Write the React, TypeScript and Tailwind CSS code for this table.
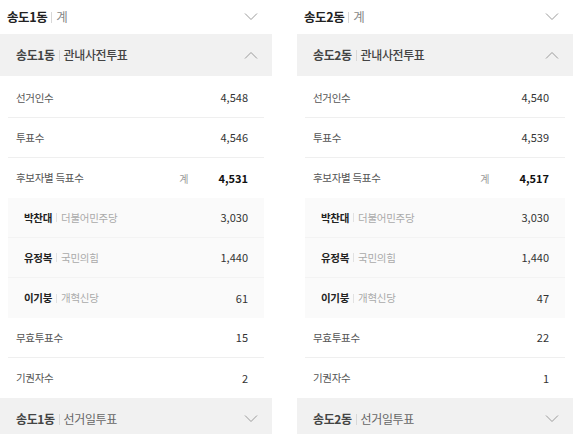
import React from "react"

type Candidate = { name: string; party: string; votes: string }

type PanelData = {
  dong: string
  electors: string
  voters: string
  total: string
  candidates: Candidate[]
  invalid: string
  abstain: string
}

const panels: PanelData[] = [
  {
    dong: "송도1동",
    electors: "4,548",
    voters: "4,546",
    total: "4,531",
    candidates: [
      { name: "박찬대", party: "더불어민주당", votes: "3,030" },
      { name: "유정복", party: "국민의힘", votes: "1,440" },
      { name: "이기붕", party: "개혁신당", votes: "61" },
    ],
    invalid: "15",
    abstain: "2",
  },
  {
    dong: "송도2동",
    electors: "4,540",
    voters: "4,539",
    total: "4,517",
    candidates: [
      { name: "박찬대", party: "더불어민주당", votes: "3,030" },
      { name: "유정복", party: "국민의힘", votes: "1,440" },
      { name: "이기붕", party: "개혁신당", votes: "47" },
    ],
    invalid: "22",
    abstain: "1",
  },
]

function Chevron({ up = false }: { up?: boolean }) {
  return (
    <svg width="14" height="8" viewBox="0 0 14 8" fill="none">
      <polyline
        points={up ? "1,7.5 7,1.5 13,7.5" : "1,0.5 7,6.5 13,0.5"}
        stroke="#9a9a9a"
        strokeWidth="1"
      />
    </svg>
  )
}

function Sep() {
  return <span className="mx-[4px] inline-block h-[11px] w-px bg-[#d8d8d8]" />
}

function Row({ label, value, last = false }: { label: string; value: string; last?: boolean }) {
  return (
    <div
      className={`flex h-[40px] items-center justify-between pl-2 pr-4 ${last ? "" : "border-b border-[#efefef]"}`}
    >
      <span className="text-[10.5px] tracking-[-0.3px] text-[#555]">{label}</span>
      <span className="text-[11px] text-[#333]">{value}</span>
    </div>
  )
}

function Panel({ data, wide }: { data: PanelData; wide?: boolean }) {
  return (
    <div className={`shrink-0 ${wide ? "w-[276px]" : "w-[272px]"}`}>
      <div className="flex h-[34px] items-center justify-between pl-[7px] pr-[14px]">
        <div className="flex items-center text-[12.5px] tracking-[-0.4px]">
          <span className="font-bold text-[#222]">{data.dong}</span>
          <Sep />
          <span className="text-[#888]">계</span>
        </div>
        <Chevron />
      </div>

      <div className="flex h-[42px] items-center justify-between bg-[#f1f1f1] pl-4 pr-[14px]">
        <div className="flex items-center text-[12px] tracking-[-0.4px] text-[#444]">
          <span className="font-bold">{data.dong}</span>
          <Sep />
          <span className="font-medium">관내사전투표</span>
        </div>
        <Chevron up />
      </div>

      <div className="px-2">
        <div className="h-[2px]" />
        <Row label="선거인수" value={data.electors} />
        <Row label="투표수" value={data.voters} />
        <div className="flex h-[40px] items-center justify-between pl-2 pr-4">
          <span className="text-[10.5px] tracking-[-0.3px] text-[#555]">후보자별 득표수</span>
          <div className="flex items-center">
            <span className="mr-[30px] text-[10px] text-[#999]">계</span>
            <span className="text-[11px] font-bold text-[#111]">{data.total}</span>
          </div>
        </div>

        <div className="bg-[#fafafa]">
          {data.candidates.map((c, i) => (
            <div
              key={c.name}
              className={`flex h-[40px] items-center justify-between pl-4 pr-4 ${
                i < data.candidates.length - 1 ? "border-b border-[#f3f3f3]" : ""
              }`}
            >
              <div className="flex items-center text-[10.5px] tracking-[-0.3px]">
                <span className="font-bold text-[#222]">{c.name}</span>
                <span className="mx-[4px] inline-block h-[9px] w-px bg-[#e2e2e2]" />
                <span className="text-[#aaa]">{c.party}</span>
              </div>
              <span className="text-[11px] text-[#333]">{c.votes}</span>
            </div>
          ))}
        </div>

        <Row label="무효투표수" value={data.invalid} />
        <Row label="기권자수" value={data.abstain} last />
      </div>

      <div className="flex h-[42px] items-center justify-between bg-[#f1f1f1] pl-4 pr-[14px]">
        <div className="flex items-center text-[12px] tracking-[-0.4px] text-[#444]">
          <span className="font-bold">{data.dong}</span>
          <Sep />
          <span className="text-[#666]">선거일투표</span>
        </div>
        <Chevron />
      </div>
    </div>
  )
}

export default function App() {
  return (
    <div
      className="flex h-[434px] w-[579px] gap-[25px] overflow-hidden bg-white"
      style={{ fontFamily: '"Noto Sans CJK KR", "Noto Sans", sans-serif' }}
    >
      <Panel data={panels[0]} />
      <Panel data={panels[1]} wide />
    </div>
  )
}
